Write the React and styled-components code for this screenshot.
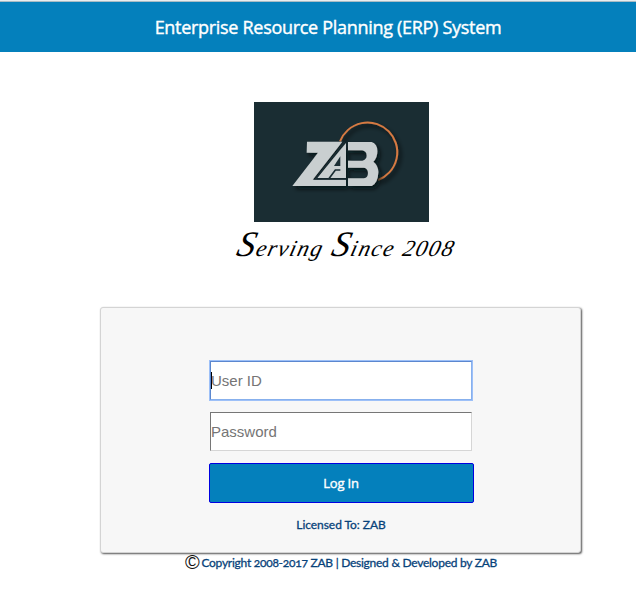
import React from "react";
import styled, { createGlobalStyle } from "styled-components";

const GlobalStyle = createGlobalStyle`
  * { box-sizing: border-box; }
  body { margin: 0; background: #fff; overflow: hidden; }
`;

const Page = styled.div`
  width: 636px;
  height: 611px;
  display: flex;
  flex-direction: column;
`;

const Header = styled.header`
  height: 52px;
  border-top: 1px solid #e9edef;
  background: #0480bc;
  box-shadow: inset 0 1px 0 #a9bcc5;
  display: flex;
  justify-content: center;
  padding: 1px 0 0 20px;
`;

const Title = styled.h1`
  margin: 0;
  font: 400 18px/50px "Open Sans", sans-serif;
  letter-spacing: -0.3px;
  color: #fff;
  white-space: nowrap;
  -webkit-text-stroke: 0.4px #fff;
`;

const Main = styled.main`
  width: 482px;
  margin: 50px 0 0 100px;
  display: flex;
  flex-direction: column;
  align-items: center;
`;

const Logo = styled.svg`
  display: block;
  width: 175px;
  height: 120px;
`;

const Tagline = styled.div`
  height: 85px;
  padding-left: 6px;
  font: italic 400 23px/54px "Liberation Serif", serif;
  letter-spacing: 1.4px;
  word-spacing: 1px;
  color: #000;
  white-space: nowrap;
  transform: skewX(-14deg);
  transform-origin: 50% 35px;
`;

const Initial = styled.span`
  font-size: 36px;
  line-height: 1px;
`;

const Card = styled.form`
  width: 481px;
  align-self: flex-start;
  height: 246px;
  border: 1px solid #d4d4d4;
  border-radius: 3px;
  background: #f7f7f7;
  box-shadow: 1px 1px 2px #555;
  display: flex;
  flex-direction: column;
  align-items: center;
  padding: 53px 0 0 1px;
`;

const Field = styled.div`
  width: 262px;
  height: 39px;
  margin-bottom: 12px;
  display: flex;
  align-items: center;
  background: #fff;
  border: 1px solid;
  border-color: ${(p) => (p.$focused ? "#5b87cf #87b0ed #87b0ed #5b87cf" : "#767676 #d6d6d6 #d6d6d6 #767676")};
  box-shadow: ${(p) => (p.$focused ? "0 0 0 1px #9dc0f8" : "none")};
  font: 15px/18px "Liberation Sans", Arial, sans-serif;
  color: #757575;
`;

const Caret = styled.span`
  width: 1px;
  height: 17px;
  margin-right: -1px;
  background: #000;
`;

const Button = styled.button`
  width: 265px;
  height: 40px;
  padding: 0;
  border: 1px solid #0000e0;
  border-radius: 2px;
  background: #0480bc;
  color: #fff;
  font: 400 13px/38px "Open Sans", sans-serif;
  letter-spacing: -0.15px;
  -webkit-text-stroke: 0.4px #fff;
`;

const Note = styled.div`
  margin-top: 14px;
  font: 400 12px/16px Lato, sans-serif;
  letter-spacing: -0.05px;
  -webkit-text-stroke: 0.3px #07427a;
  color: #07427a;
`;

const Footer = styled.footer`
  display: flex;
  align-items: center;
  gap: 2px;
  height: 20px;
  font: 400 12px/18px Lato, sans-serif;
  letter-spacing: -0.26px;
  -webkit-text-stroke: 0.3px #07427a;
  font-variant-numeric: oldstyle-nums;
  color: #07427a;
  white-space: nowrap;
`;

const CopyMark = styled.span`
  font: 400 20px/18px "Liberation Sans", sans-serif;
  -webkit-text-stroke: 0;
  margin-top: -2px;
  color: #111;
`;

function ZabLogo() {
  return (
    <Logo viewBox="12 12 525 360" role="img" aria-label="ZAB">
      <defs>
        <filter id="shade" x="-20%" y="-20%" width="150%" height="150%">
          <feDropShadow dx="8" dy="9" stdDeviation="7" floodColor="#030b0e" floodOpacity="0.8" />
        </filter>
      </defs>
      <rect x="12" y="12" width="525" height="360" fill="#1a2d33" />
      <path d="M270 130 A89 89 0 1 1 384 246" fill="none" stroke="#d67a42" strokeWidth="6" filter="url(#shade)" />
      <g fill="#c9cfd0" filter="url(#shade)">
        <path d="M171 131 H277 L188 245 H288 V264 H127 L204 164 H170 Z" />
        <path d="M288 135 V240 H202 Z" />
        <path d="M294 132 H365 Q382 137 382 160 Q382 180 370 191 Q385 203 385 222 Q384 255 365 264 H294 V241 H342 Q354 239 354 225 Q354 211 342 209 H294 V188 H337 Q350 184 350 173 Q350 160 337 157 H294 Z" />
      </g>
      <path d="M271 175 V204 H252 Z" fill="#1a2d33" />
      <path d="M236 243 L256 216 H271" fill="none" stroke="#1a2d33" strokeWidth="5" />
      <path d="M284 131 L196 243 H289" fill="none" stroke="#1a2d33" strokeWidth="5" />
    </Logo>
  );
}

export default function App() {
  return (
    <>
      <GlobalStyle />
      <Page>
        <Header>
          <Title>Enterprise Resource Planning (ERP) System</Title>
        </Header>
        <Main>
          <ZabLogo />
          <Tagline>
            <Initial>S</Initial>erving <Initial>S</Initial>ince 2008
          </Tagline>
          <Card>
            <Field $focused>
              <Caret />
              User ID
            </Field>
            <Field>Password</Field>
            <Button type="button">Log In</Button>
            <Note>Licensed To: ZAB</Note>
          </Card>
          <Footer>
            <CopyMark>©</CopyMark>
            <span>Copyright 2008-2017 ZAB | Designed &amp; Developed by ZAB</span>
          </Footer>
        </Main>
      </Page>
    </>
  );
}
